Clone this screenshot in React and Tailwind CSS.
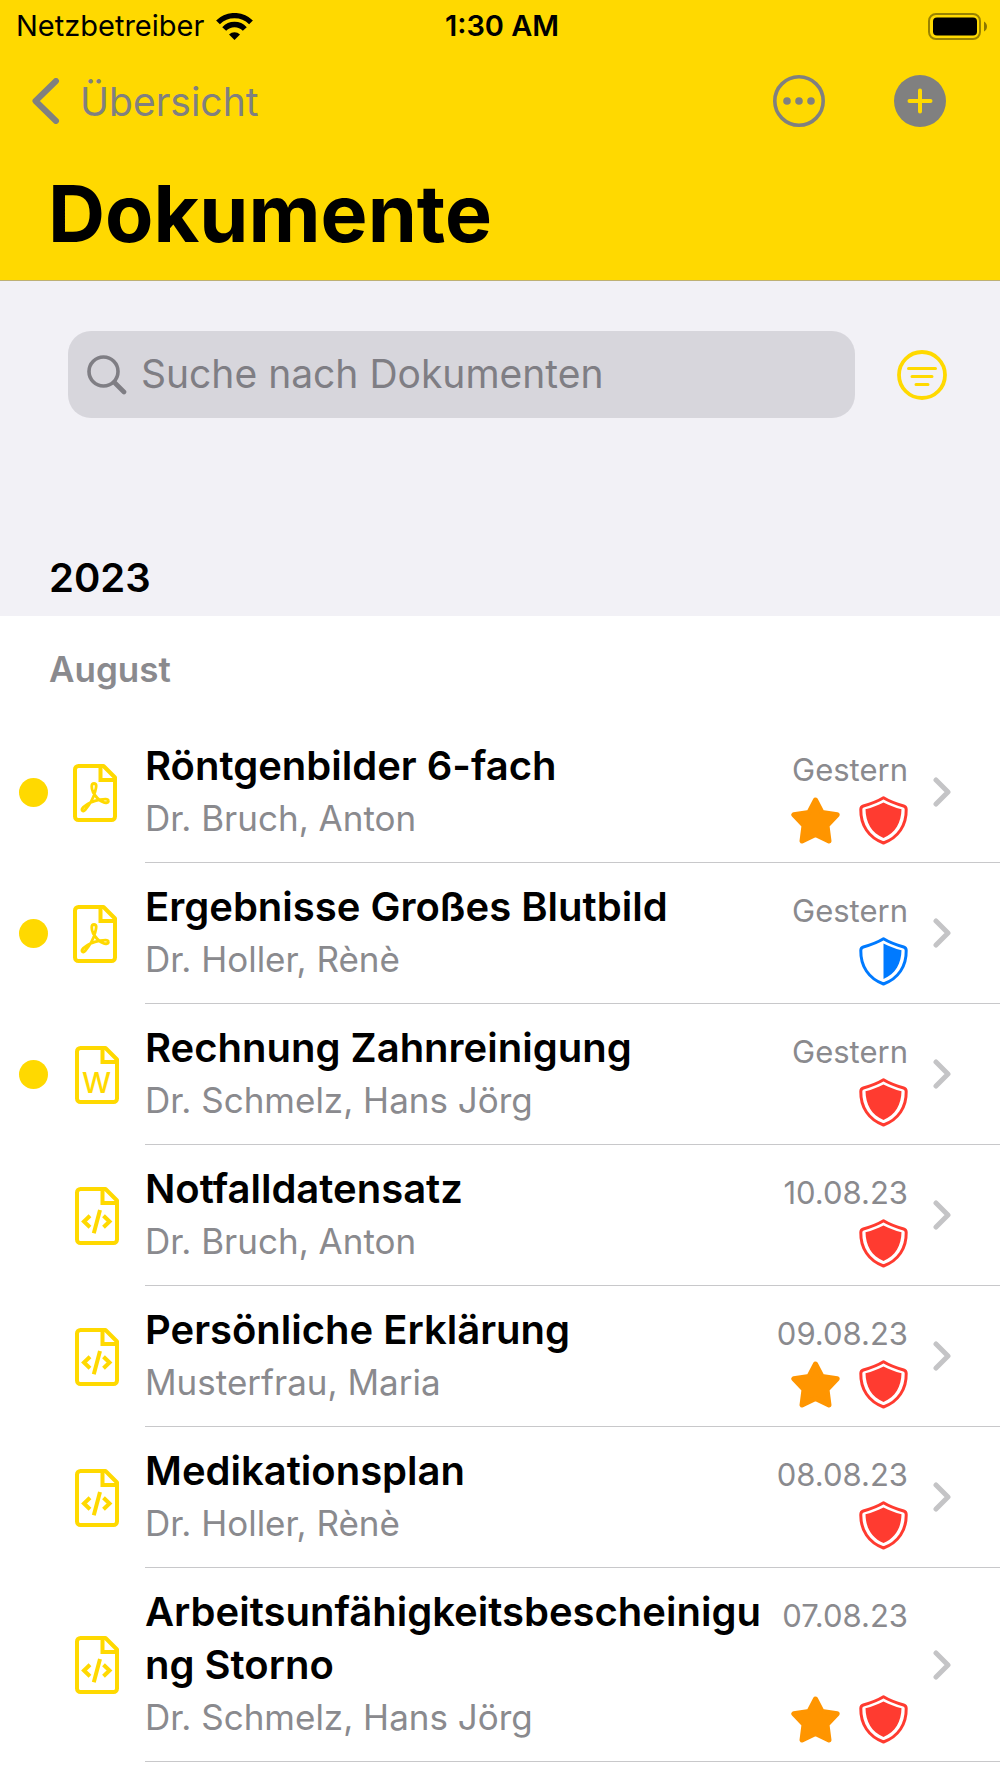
import React, { useState } from 'react';

const documents = [
  { id: 1, title: 'Röntgenbilder 6-fach', author: 'Dr. Bruch, Anton', date: 'Gestern', type: 'pdf', unread: true, favorite: true, shield: 'full' },
  { id: 2, title: 'Ergebnisse Großes Blutbild', author: 'Dr. Holler, Rènè', date: 'Gestern', type: 'pdf', unread: true, favorite: false, shield: 'half' },
  { id: 3, title: 'Rechnung Zahnreinigung', author: 'Dr. Schmelz, Hans Jörg', date: 'Gestern', type: 'word', unread: true, favorite: false, shield: 'full' },
  { id: 4, title: 'Notfalldatensatz', author: 'Dr. Bruch, Anton', date: '10.08.23', type: 'code', unread: false, favorite: false, shield: 'full' },
  { id: 5, title: 'Persönliche Erklärung', author: 'Musterfrau, Maria', date: '09.08.23', type: 'code', unread: false, favorite: true, shield: 'full' },
  { id: 6, title: 'Medikationsplan', author: 'Dr. Holler, Rènè', date: '08.08.23', type: 'code', unread: false, favorite: false, shield: 'full' },
  { id: 7, title: 'Arbeitsunfähigkeitsbescheinigung Storno', author: 'Dr. Schmelz, Hans Jörg', date: '07.08.23', type: 'code', unread: false, favorite: true, shield: 'full' }
];

function WifiIcon() {
  return (
    <svg width="37" height="27" viewBox="0 0 37 27" fill="none" stroke="#000" strokeWidth="5.4" aria-hidden="true">
      <path d="M2 9.4A23.5 23.5 0 0 1 35 9.4" />
      <path d="M8.2 16A14.2 14.2 0 0 1 28.8 16" />
      <path d="M18.5 27L13 21.4a8.2 8.2 0 0 1 11 0z" fill="#000" stroke="none" />
    </svg>
  );
}

function BatteryIcon() {
  return (
    <svg width="60" height="27" viewBox="0 0 60 27" aria-hidden="true">
      <rect x="1" y="1" width="51" height="25" rx="7" fill="none" stroke="#000" strokeOpacity="0.4" strokeWidth="2" />
      <rect x="5" y="4.5" width="44" height="18" rx="4" fill="#000" />
      <path d="M56 8.5c4 2 4 8 0 10z" fill="#000" fillOpacity="0.45" />
    </svg>
  );
}

function FileIcon({ type }) {
  return (
    <svg
      className="shrink-0"
      width="46"
      height="58"
      viewBox={type === 'pdf' ? '0 0 46 58' : '-2 0 46 58'}
      fill="none"
      stroke="#ffd900"
      strokeWidth="4"
      strokeLinejoin="round"
      aria-hidden="true"
    >
      <path d="M5.5 2H30.5L42 13.5V52.5a3.5 3.5 0 0 1-3.5 3.5H5.5A3.5 3.5 0 0 1 2 52.5V5.5A3.5 3.5 0 0 1 5.5 2z" />
      <path d="M27.5 2V16H42" strokeLinejoin="miter" />
      {type === 'pdf' && (
        <path
          strokeWidth="2.8"
          d="M21 19.5C18 19.5 18.3 24 20 28C22 32 25.5 36 30 38C33 39.5 35.8 38.5 35.3 36.5C35 34.5 31 35 27 35.7C21 37 14 40 10.5 43C7.5 46 9.5 48.5 12 46C16 41.5 20.5 33.5 22 28C23.5 23 24 19.5 21 19.5z"
        />
      )}
      {type === 'word' && (
        <text x="21.5" y="46.5" textAnchor="middle" fill="#ffd900" stroke="none" fontFamily="Inter, sans-serif" fontSize="29" fontWeight="500">
          W
        </text>
      )}
      {type === 'code' && (
        <path strokeLinejoin="miter" d="M15 28.8L9 34.5L15 40.2M28.5 28.8L34.5 34.5L28.5 40.2M25 23L18.8 46.3" />
      )}
    </svg>
  );
}

function StarIcon() {
  return (
    <svg width="49" height="49" viewBox="0 0 49 49" fill="#ff9500" stroke="#ff9500" strokeWidth="5" strokeLinejoin="round" role="img" aria-label="Favorit">
      <path d="M24.5 4L31 16.5L46.2 18.7L36 29.5L38 45L24.5 38.5L11 45L13 29.5L2.8 18.7L18 16.5z" />
    </svg>
  );
}

function ShieldIcon({ variant }) {
  const color = variant === 'half' ? '#007aff' : '#ff3b30';
  return (
    <svg width="49" height="49" viewBox="0 0 49 49" role="img" aria-label="Schutz">
      <path
        fill="none"
        stroke={color}
        strokeWidth="3"
        strokeLinejoin="round"
        d="M24.5 1.8C19 5.2 11.5 8 4.3 10C2.5 10.5 1.8 11.5 1.8 13.5C1.5 29 9.5 41.5 24.5 47C39.5 41.5 47.5 29 47.2 13.5C47.2 11.5 46.5 10.5 44.7 10C37.5 8 30 5.2 24.5 1.8z"
      />
      {variant === 'half' ? (
        <path fill={color} d="M24.5 6.5C30 9.5 36 11.5 42.5 13.3C42.3 26.5 36.5 37 24.5 42z" />
      ) : (
        <path fill={color} d="M24.5 6.5C30 9.5 36 11.5 42.5 13.3C42.3 26.5 36.5 37 24.5 42C12.5 37 6.7 26.5 6.5 13.3C13 11.5 19 9.5 24.5 6.5z" />
      )}
    </svg>
  );
}

function DocumentRow({ doc }) {
  return (
    <li>
      <a href="#" className="flex items-center pl-[19px]">
        <span className={doc.unread ? 'size-[29px] shrink-0 rounded-full bg-[#ffd900]' : 'size-[29px] shrink-0'} />
        <span className="ml-[25px] mr-[26px] flex shrink-0">
          <FileIcon type={doc.type} />
        </span>
        <div className="flex min-w-0 flex-1 items-center border-b border-[#c8c8ca] py-[17px] pr-[48px]">
          <div className="min-w-0 flex-1">
            <h3 className="text-[40px] leading-[53px] font-semibold break-all text-black">{doc.title}</h3>
            <p className="text-[35px] leading-[53px] text-[#8a8a8e]">{doc.author}</p>
          </div>
          <div className="ml-4 flex shrink-0 flex-col items-end justify-between self-stretch pt-1">
            <span className="text-[31px] leading-[53px] text-[#8a8a8e]">{doc.date}</span>
            <span className="flex gap-[19px]">
              {doc.favorite && <StarIcon />}
              <ShieldIcon variant={doc.shield} />
            </span>
          </div>
          <svg className="ml-6 shrink-0" width="20" height="30" viewBox="0 0 20 30" fill="none" stroke="#c4c4c6" strokeWidth="5" strokeLinecap="round" strokeLinejoin="round" aria-hidden="true">
            <path d="M4 3L16 15L4 27" />
          </svg>
        </div>
      </a>
    </li>
  );
}

export default function App() {
  const [query, setQuery] = useState('');

  const visible = documents.filter((doc) =>
    doc.title.toLowerCase().includes(query.toLowerCase())
  );

  return (
    <div className="min-h-screen bg-white font-['Inter',sans-serif] text-black">
      <header className="border-b border-[#bdb074] bg-[#ffd900]">
        {/* Status bar */}
        <div className="grid h-[52px] grid-cols-3 items-center pr-[12px] pl-[16px] text-[29px] leading-8">
          <div className="flex items-center gap-3">
            <span>Netzbetreiber</span>
            <WifiIcon />
          </div>
          <span className="text-center font-semibold">1:30 AM</span>
          <div className="flex justify-end">
            <BatteryIcon />
          </div>
        </div>

        {/* Navigation */}
        <nav className="flex h-[98px] items-center justify-between pr-[54px] pl-[32px]">
          <a href="#" className="flex items-center gap-5 text-[39px] leading-[53px] text-[#808080]">
            <svg width="28" height="46" viewBox="0 0 28 46" fill="none" stroke="#808080" strokeWidth="6" strokeLinecap="round" strokeLinejoin="round" aria-hidden="true">
              <path d="M24 3L3.5 23L24 43" />
            </svg>
            Übersicht
          </a>
          <div className="flex gap-[69px]">
            <button type="button" aria-label="Mehr">
              <svg width="52" height="52" viewBox="0 0 52 52" fill="#808080">
                <circle cx="26" cy="26" r="24.2" fill="none" stroke="#808080" strokeWidth="3.6" />
                <circle cx="14" cy="26" r="3.8" />
                <circle cx="26" cy="26" r="3.8" />
                <circle cx="38" cy="26" r="3.8" />
              </svg>
            </button>
            <button type="button" aria-label="Hinzufügen">
              <svg width="52" height="52" viewBox="0 0 52 52">
                <circle cx="26" cy="26" r="26" fill="#808080" />
                <path d="M26 15.5V36.5M15.5 26H36.5" stroke="#ffd900" strokeWidth="4" strokeLinecap="round" />
              </svg>
            </button>
          </div>
        </nav>

        <h1 className="px-[48px] pt-[15px] pb-[19px] text-[79px] leading-[96px] font-bold">Dokumente</h1>
      </header>

      <main>
        <section className="bg-[#f2f1f6] pt-[50px]">
          {/* Search */}
          <div className="flex items-center gap-[42px] pr-[53px] pl-[68px]">
            <label className="flex h-[87px] flex-1 items-center gap-[14px] rounded-[23px] bg-[#d7d6dc] px-[19px]">
              <svg className="shrink-0" width="40" height="40" viewBox="0 0 40 40" fill="none" stroke="#7f7e84" strokeLinecap="round" aria-hidden="true">
                <circle cx="16.5" cy="16.5" r="14.5" strokeWidth="3.6" />
                <path d="M27.5 27.5L37 37" strokeWidth="4.6" />
              </svg>
              <input
                type="text"
                aria-label="Suche nach Dokumenten"
                placeholder="Suche nach Dokumenten"
                value={query}
                onChange={(e) => setQuery(e.target.value)}
                className="h-[53px] w-full min-w-0 bg-transparent text-[39px] outline-none placeholder:text-[#7f7e84]"
              />
            </label>
            <button type="button" aria-label="Filter" className="shrink-0">
              <svg width="50" height="50" viewBox="0 0 50 50" fill="none" stroke="#ffd900" strokeLinecap="round">
                <circle cx="25" cy="25" r="23" strokeWidth="3.8" />
                <path d="M11.500 18.500H38.500M15 26.500H35M19 34.500H31" strokeWidth="3" />
              </svg>
            </button>
          </div>
          <h2 className="px-[49px] pt-[133px] pb-[12px] text-[40px] leading-[53px] font-semibold">2023</h2>
        </section>

        <section>
          <h3 className="px-[49px] py-[27px] text-[35px] leading-[52px] font-semibold text-[#8a8a8e]">August</h3>
          <ul>
            {visible.map((doc) => (
              <DocumentRow key={doc.id} doc={doc} />
            ))}
          </ul>
        </section>
      </main>
    </div>
  );
}
